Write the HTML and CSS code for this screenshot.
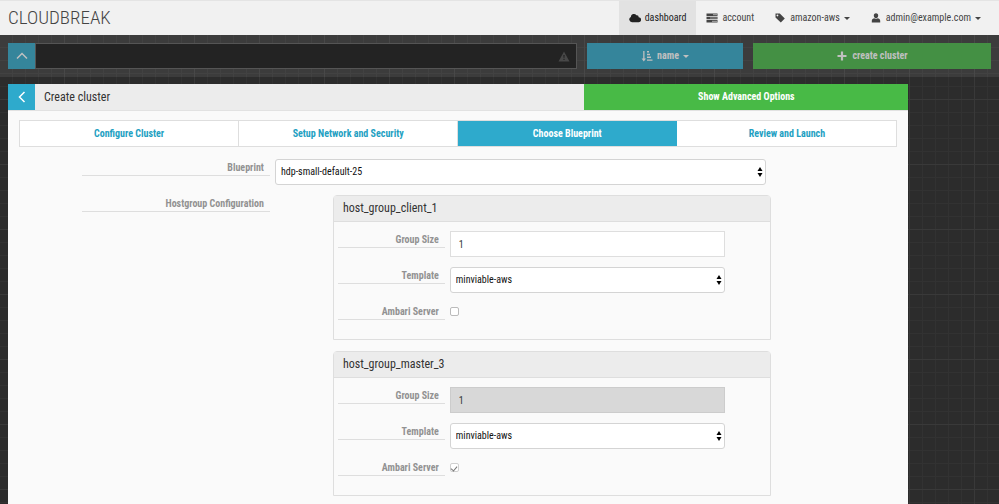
FILE: index.html
```html
<!DOCTYPE html>
<html lang="en">
  <head>
    <meta charset="UTF-8" />
    <meta name="viewport" content="width=device-width, initial-scale=1.0" />
    <title>Cloudbreak</title>
    <link rel="stylesheet" href="styles.css">
  </head>
  <body>
    <header class="navbar">
      <a class="brand" href="#">CLOUDBREAK</a>
      <nav class="nav">
        <a class="nav-item active" href="#">
          <svg class="icon" viewBox="0 0 12 10"><path d="M3 9.2A2.8 2.8 0 0 1 1.800 3.900 3.100 3.100 0 0 1 7.400 2.200 2 2 0 0 1 9.700 4.200 2.500 2.500 0 0 1 9.500 9.200z"/></svg>
          dashboard
        </a>
        <a class="nav-item" href="#">
          <svg class="icon" viewBox="0 0 12 10"><path d="M.5.500h11v2.400H.5zM.5 3.800h11v2.400H.5zM.5 7.100h11v2.400H.5z"/><path class="cut" d="M7 1.100h4v1.200H7zM4 4.400h7v1.200H4zM6 7.700h5v1.200H6z"/></svg>
          account
        </a>
        <a class="nav-item" href="#">
          <svg class="icon" viewBox="0 0 12 10"><path fill-rule="evenodd" d="M1.500.500H5.800L10.800 5.400 6.800 9.400 1.500 4.500zM3.400 1.500a.9.9 0 1 0 .1 0z"/></svg>
          amazon-aws
          <span class="caret"></span>
        </a>
        <a class="nav-item" href="#">
          <svg class="icon" viewBox="0 0 12 10"><path d="M6 .3c1.500 0 2.300 1 2.200 2.500C8.100 4.300 7.200 5.300 6 5.300S3.900 4.300 3.800 2.800C3.700 1.300 4.500.3 6 .3zM1.800 9.500V7.700c0-1.500 1.300-2.400 2.600-2.500 1 .7 2.200.7 3.200 0 1.300.1 2.600 1 2.600 2.500v1.800z"/></svg>
          admin@example.com
          <span class="caret"></span>
        </a>
      </nav>
    </header>

    <div class="toolbar">
      <div class="search">
        <button class="btn btn-square btn-info dim" type="button" aria-label="Toggle notifications">
          <svg class="chevron" viewBox="0 0 12 12"><path d="M1 8.500l5-5 5 5"/></svg>
        </button>
        <input class="notification" type="text" aria-label="Notifications" readonly>
        <svg class="warning" viewBox="0 0 12 11"><path fill-rule="evenodd" d="M6 .5L11.500 10.500H.5zM5.300 4l.3 3h.8l.3-3zM5.400 7.800v1.200h1.200V7.800z"/></svg>
      </div>
      <button class="btn btn-info dim" type="button">
        <svg class="icon" viewBox="0 0 12 12"><path d="M2.200 1h1.300v7.500H5L2.800 11.500.6 8.500h1.600zM6 1h2v1.400H6zM6 3.800h3v1.400H6zM6 6.600h4V8H6zM6 9.400h5.500v1.400H6z"/></svg>
        name
        <span class="caret"></span>
      </button>
      <button class="btn btn-success dim" type="button">
        <svg class="icon" viewBox="0 0 12 12"><path d="M4.900 1.500h2.200v3.400h3.400v2.200H7.100v3.400H4.900V7.100H1.500V4.900h3.400z"/></svg>
        create cluster
      </button>
    </div>

    <main class="page">
      <section class="panel">
        <div class="panel-head">
          <button class="btn btn-square btn-info" type="button" aria-label="Back">
            <svg class="chevron" viewBox="0 0 12 12"><path d="M8.500 1l-5 5 5 5"/></svg>
          </button>
          <h1 class="panel-title">Create cluster</h1>
          <button class="btn btn-success btn-advanced" type="button">Show Advanced Options</button>
        </div>

        <div class="panel-body">
          <div class="steps">
            <button class="step" type="button">Configure Cluster</button>
            <button class="step" type="button">Setup Network and Security</button>
            <button class="step active" type="button">Choose Blueprint</button>
            <button class="step" type="button">Review and Launch</button>
          </div>

          <form class="form">
            <div class="row">
              <label class="label" for="blueprint">Blueprint</label>
              <div class="select">
                <select id="blueprint">
                  <option>hdp-small-default-25</option>
                </select>
                <svg class="arrows" viewBox="0 0 6 10"><path d="M3 0l2.500 4h-5zM3 10L.5 6h5z"/></svg>
              </div>
            </div>

            <div class="row">
              <div class="label">Hostgroup Configuration</div>
              <div class="groups">
                <section class="group">
                  <h2 class="group-title">host_group_client_1</h2>
                  <div class="group-body">
                    <div class="group-row">
                      <label class="label" for="size-client">Group Size</label>
                      <input class="text" id="size-client" type="text" value="1">
                    </div>
                    <div class="group-row">
                      <label class="label" for="template-client">Template</label>
                      <div class="select">
                        <select id="template-client">
                          <option>minviable-aws</option>
                        </select>
                        <svg class="arrows" viewBox="0 0 6 10"><path d="M3 0l2.500 4h-5zM3 10L.5 6h5z"/></svg>
                      </div>
                    </div>
                    <div class="group-row">
                      <label class="label" for="ambari-client">Ambari Server</label>
                      <input class="check" id="ambari-client" type="checkbox">
                    </div>
                  </div>
                </section>

                <section class="group">
                  <h2 class="group-title">host_group_master_3</h2>
                  <div class="group-body">
                    <div class="group-row">
                      <label class="label" for="size-master">Group Size</label>
                      <input class="text" id="size-master" type="text" value="1" disabled>
                    </div>
                    <div class="group-row">
                      <label class="label" for="template-master">Template</label>
                      <div class="select">
                        <select id="template-master">
                          <option>minviable-aws</option>
                        </select>
                        <svg class="arrows" viewBox="0 0 6 10"><path d="M3 0l2.500 4h-5zM3 10L.5 6h5z"/></svg>
                      </div>
                    </div>
                    <div class="group-row">
                      <label class="label" for="ambari-master">Ambari Server</label>
                      <input class="check" id="ambari-master" type="checkbox" checked disabled>
                    </div>
                  </div>
                </section>
              </div>
            </div>
          </form>
        </div>
      </section>
    </main>
  </body>
</html>
```
FILE: styles.css
```css
* {
  box-sizing: border-box;
}
:root {
  --blue: #2eaacc;
  --green: #48ba46;
  --line: #dedede;
}
html {
  height: 100%;
}
body {
  margin: 0;
  height: 100%;
  overflow: hidden;
  font-family: "Roboto Condensed", "Liberation Sans Narrow", Roboto, sans-serif;
  font-size: 10px;
  line-height: 16px;
  color: #333;
  background-color: #2c2c2c;
  background-image:
    linear-gradient(#393939 1px, transparent 1px),
    linear-gradient(90deg, #393939 1px, transparent 1px),
    linear-gradient(#323232 1px, transparent 1px),
    linear-gradient(90deg, #323232 1px, transparent 1px);
  background-size: 65px 65px, 65px 65px, 13px 13px, 13px 13px;
  background-position: 0 34px, 64px 0, 0 8px, 12px 0;
}
button,
input,
select {
  font: inherit;
  color: inherit;
  margin: 0;
}
h1,
h2 {
  margin: 0;
  font-weight: 400;
}

/* top navigation */
.navbar {
  display: flex;
  justify-content: space-between;
  height: 35px;
  padding: 0 8px;
  background: #f1f1f1;
  border-top: 1px solid #e4e4e4;
}
.brand {
  font-size: 19px;
  font-weight: 300;
  line-height: 34px;
  color: #444;
  text-decoration: none;
}
.nav {
  display: flex;
}
.nav-item {
  display: flex;
  align-items: center;
  gap: 4px;
  padding: 0 10px;
  color: #444;
  text-decoration: none;
}
.nav-item.active {
  color: #222;
  background: #e2e2e2;
}
.icon {
  width: 12px;
  height: 12px;
  fill: currentColor;
}
.icon .cut {
  fill: #999;
}
.caret {
  border: 3px solid transparent;
  border-top-color: currentColor;
  border-bottom: 0;
}

/* toolbar */
.toolbar {
  display: grid;
  grid-template-columns: 569fr 156fr 238fr;
  gap: 10px;
  padding: 8px;
  background: rgba(255, 255, 255, 0.08);
}
.search {
  position: relative;
  display: flex;
}
.notification {
  flex: 1;
  min-width: 0;
  background: #232323;
  border: 1px solid #555;
}
.warning {
  position: absolute;
  right: 7px;
  top: 8px;
  width: 12px;
  height: 11px;
  fill: #484848;
}
.btn {
  display: flex;
  align-items: center;
  justify-content: center;
  gap: 4px;
  height: 26px;
  padding: 0;
  border: 0;
  color: #fff;
  font-weight: 700;
}
.btn-square {
  flex: 0 0 27px;
}
.btn-info {
  background: var(--blue);
}
.btn-success {
  background: var(--green);
}
.btn.dim {
  color: #c0c0c0;
}
.btn-info.dim {
  background: #35859b;
}
.btn-success.dim {
  background: #449044;
}
.chevron {
  width: 12px;
  height: 12px;
  fill: none;
  stroke: currentColor;
  stroke-width: 1.5;
}

/* create cluster panel */
.page {
  padding: 7px 8px 0;
}
.panel {
  width: 91.6%;
  background: #fafafa;
}
.panel-head {
  display: flex;
  background: #ececec;
  border-bottom: 1px solid #e2e2e2;
}
.panel-title {
  flex: 1;
  padding-left: 9px;
  font-size: 12px;
  line-height: 26px;
}
.btn-advanced {
  flex: 0 0 36%;
}
.panel-body {
  padding: 9px 11px 20px;
}
.steps {
  display: grid;
  grid-template-columns: repeat(4, 1fr);
  border: 1px solid var(--line);
}
.step {
  height: 25px;
  padding: 0;
  background: #fff;
  border: 0;
  border-right: 1px solid var(--line);
  color: #239fc2;
  font-weight: 700;
}
.step:last-child {
  border-right: 0;
}
.step.active {
  background: var(--blue);
  border-color: var(--blue);
  color: #fff;
}

/* form */
.form {
  padding-top: 12px;
}
.row {
  display: grid;
  grid-template-columns: 188fr 491fr;
  column-gap: 5px;
  align-items: start;
  margin: 0 15% 10px 63px;
}
.label {
  padding: 1px 6px 0 0;
  border-bottom: 1px solid var(--line);
  line-height: 15px;
  color: #929292;
  font-weight: 700;
  text-align: right;
}
.select {
  position: relative;
}
.select select {
  display: block;
  width: 100%;
  height: 26px;
  padding: 0 5px;
  appearance: none;
  background: #fff;
  border: 1px solid #d4d4d4;
  border-radius: 3px;
  color: #111;
}
.arrows {
  position: absolute;
  right: 3px;
  top: 8px;
  width: 6px;
  height: 10px;
}
.groups {
  display: grid;
  gap: 11px;
  margin: 0 -5px 0 58px;
}
.group {
  border: 1px solid var(--line);
  border-radius: 4px 4px 0 0;
}
.group-title {
  padding-left: 9px;
  font-size: 12px;
  line-height: 25px;
  background: #ececec;
  border-bottom: 1px solid var(--line);
}
.group-body {
  display: grid;
  gap: 10px;
  padding: 9px 45px 10px 4px;
}
.group-row {
  display: grid;
  grid-template-columns: 107fr 275fr;
  column-gap: 5px;
  align-items: start;
  height: 26px;
}
.text {
  min-width: 0;
  height: 26px;
  padding: 0 8px;
  background: #fff;
  border: 1px solid var(--line);
}
.text:disabled {
  background: #d8d8d8;
  border-color: #ccc;
}
.check {
  display: grid;
  place-items: center;
  width: 9px;
  height: 9px;
  margin-top: 4px;
  appearance: none;
  background: #fff;
  border: 1px solid #bbb;
  border-radius: 2px;
}
.check:checked::after {
  content: "";
  width: 3px;
  height: 5px;
  border: solid #777;
  border-width: 0 1px 1px 0;
  transform: rotate(40deg);
}
.check:disabled {
  border-color: #d0d0d0;
}
```
